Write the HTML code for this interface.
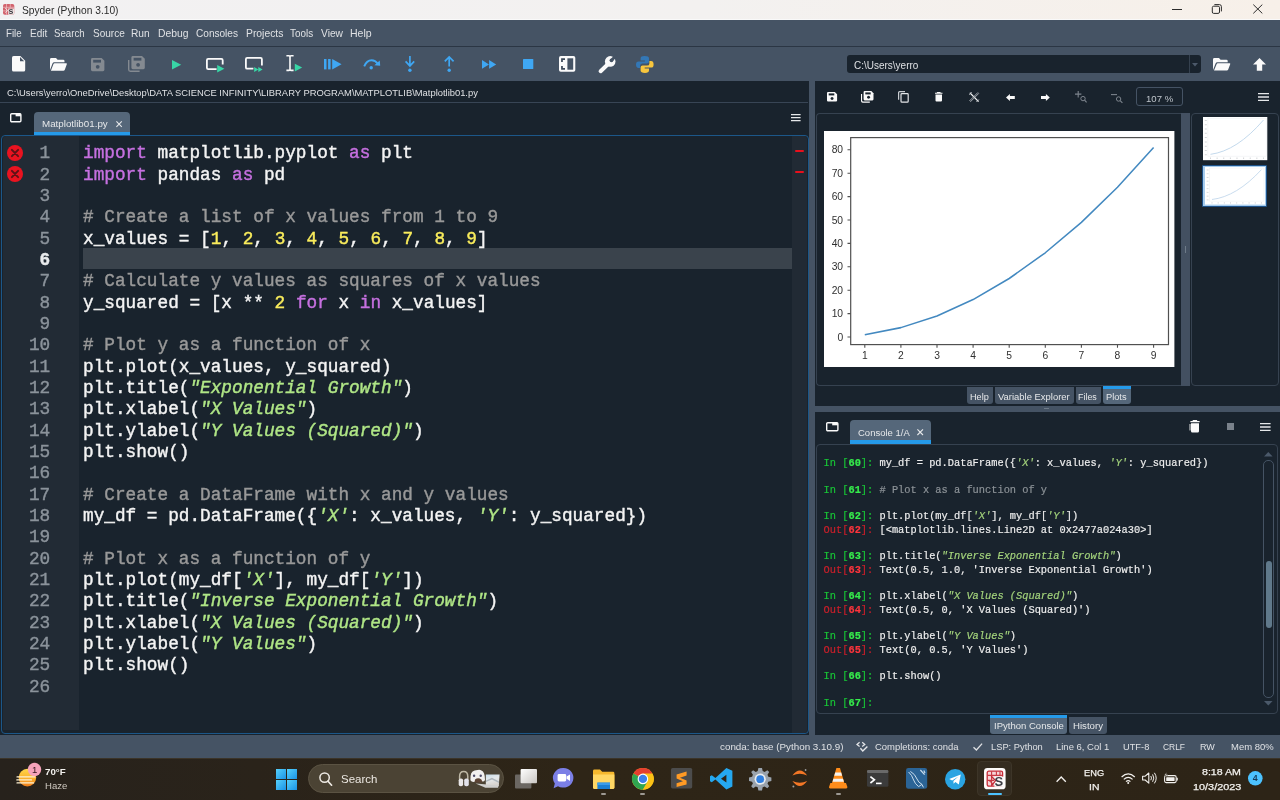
<!DOCTYPE html>
<html><head><meta charset="utf-8"><title>Spyder (Python 3.10)</title>
<style>
*{box-sizing:border-box;margin:0;padding:0}
html,body{width:1280px;height:800px;overflow:hidden;background:#19232d;font-family:"Liberation Sans",sans-serif;color:#e0e1e3}
#root{position:absolute;left:0;top:0;width:1280px;height:800px;overflow:hidden;will-change:transform}
.a{position:absolute}
.t{position:absolute;white-space:pre}
svg{overflow:visible}
</style></head>
<body>
<div id="root">
<div class="a" style="left:0.00px;top:0.00px;width:1280.00px;height:20.00px;background:linear-gradient(90deg,#f2f1f2 0%,#f3f1f0 55%,#f7f0e9 100%);"></div>
<div class="a" style="left:0.00px;top:19.00px;width:1280.00px;height:1.10px;background:#f9f9f9;"></div>
<svg class="a" style="left:3.10px;top:4.10px;" width="11.3" height="10.7" viewBox="0 0 11.3 10.7"><rect x="0" y="0" width="11.3" height="10.7" rx="1.8" fill="#d2626d"/>
<path d="M0 3.3H11.3M0 6.9H4.6M3.5 0V10.7M7.3 0V3.6" stroke="#ecc0c4" stroke-width="0.7" fill="none"/>
<path d="M5.2 4.4H11.3V9Q11.3 10.7 9.6 10.7H5.2Z" fill="#efe3e3"/>
<text x="5.6" y="10.3" font-family="Liberation Sans" font-weight="bold" font-size="8.8" fill="#45444a">s</text>
<path d="M2.2 4.2L4.6 6.4L2.4 8.6" stroke="#f3dfe0" stroke-width="1" fill="none"/></svg>
<span class="t" style="left:21.50px;top:2.75px;font-size:11.20px;line-height:15px;transform:scaleX(0.9127);transform-origin:0 50%;color:#2a2a2a;">Spyder (Python 3.10)</span>
<svg class="a" style="left:1165.00px;top:0.00px;" width="110" height="20" viewBox="0 0 110 20"><path d="M7 9.5H17" stroke="#2b2b2b" stroke-width="1"/>
<rect x="47.3" y="6.2" width="7.2" height="7.2" rx="1.4" fill="none" stroke="#2b2b2b" stroke-width="1"/>
<path d="M49.4 4.6H54.4Q56.4 4.6 56.4 6.6V11.4" fill="none" stroke="#2b2b2b" stroke-width="1"/>
<path d="M88.3 4.6L97.3 13.4M97.3 4.6L88.3 13.4" stroke="#2b2b2b" stroke-width="1"/></svg>
<div class="a" style="left:0.00px;top:20.10px;width:1280.00px;height:25.90px;background:#455364;"></div>
<div class="a" style="left:0.00px;top:45.60px;width:1280.00px;height:1.00px;background:#2b3644;"></div>
<span class="t" style="left:6.30px;top:26.25px;font-size:11.00px;line-height:14px;transform:scaleX(0.8857);transform-origin:0 50%;color:#dfe1e4;">File</span>
<span class="t" style="left:29.70px;top:26.25px;font-size:11.00px;line-height:14px;transform:scaleX(0.9127);transform-origin:0 50%;color:#dfe1e4;">Edit</span>
<span class="t" style="left:54.40px;top:26.25px;font-size:11.00px;line-height:14px;transform:scaleX(0.8779);transform-origin:0 50%;color:#dfe1e4;">Search</span>
<span class="t" style="left:92.50px;top:26.25px;font-size:11.00px;line-height:14px;transform:scaleX(0.9124);transform-origin:0 50%;color:#dfe1e4;">Source</span>
<span class="t" style="left:131.30px;top:26.25px;font-size:11.00px;line-height:14px;transform:scaleX(0.9267);transform-origin:0 50%;color:#dfe1e4;">Run</span>
<span class="t" style="left:157.50px;top:26.25px;font-size:11.00px;line-height:14px;transform:scaleX(0.9409);transform-origin:0 50%;color:#dfe1e4;">Debug</span>
<span class="t" style="left:196.00px;top:26.25px;font-size:11.00px;line-height:14px;transform:scaleX(0.9158);transform-origin:0 50%;color:#dfe1e4;">Consoles</span>
<span class="t" style="left:245.60px;top:26.25px;font-size:11.00px;line-height:14px;transform:scaleX(0.9412);transform-origin:0 50%;color:#dfe1e4;">Projects</span>
<span class="t" style="left:290.30px;top:26.25px;font-size:11.00px;line-height:14px;transform:scaleX(0.8995);transform-origin:0 50%;color:#dfe1e4;">Tools</span>
<span class="t" style="left:321.00px;top:26.25px;font-size:11.00px;line-height:14px;transform:scaleX(0.9304);transform-origin:0 50%;color:#dfe1e4;">View</span>
<span class="t" style="left:350.30px;top:26.25px;font-size:11.00px;line-height:14px;transform:scaleX(0.9592);transform-origin:0 50%;color:#dfe1e4;">Help</span>
<div class="a" style="left:0.00px;top:46.70px;width:1280.00px;height:34.50px;background:#455364;"></div>
<svg class="a" style="left:12.40px;top:56.40px;" width="13.2" height="15.6" viewBox="0 0 13.2 15.6"><path d="M1.6 0H8.4L13.2 4.8V14Q13.2 15.6 11.6 15.6H1.6Q0 15.6 0 14V1.6Q0 0 1.6 0Z" fill="#fafafa"/><path d="M8 1V5.2H12.2Z" fill="#455364"/></svg>
<svg class="a" style="left:50.30px;top:57.80px;" width="17" height="12.8" viewBox="0 0 17 12.8"><path d="M1.4 0H6L7.6 1.7H13.2Q14.5 1.7 14.5 3V4.2H4.2Q3 4.2 2.6 5.3L0 12V1.4Q0 0 1.4 0Z" fill="#fafafa"/><path d="M4.6 5.2H16.2Q17.2 5.2 16.8 6.2L14.8 11.8Q14.4 12.8 13.4 12.8H0.9L3.5 6Q3.8 5.2 4.6 5.2Z" fill="#fafafa"/></svg>
<svg class="a" style="left:90.60px;top:57.50px;" width="13.4" height="13.2" viewBox="0 0 13.4 13.2"><path d="M1.4 0H10.6L13.4 2.8V11.8Q13.4 13.2 12 13.2H1.4Q0 13.2 0 11.8V1.4Q0 0 1.4 0Z" fill="#848a91"/><rect x="2.2" y="1.8" width="7.8" height="2.8" fill="#455364"/><circle cx="6.7" cy="8.8" r="1.9" fill="#455364"/></svg>
<svg class="a" style="left:128.00px;top:56.20px;" width="17" height="16" viewBox="0 0 17 16"><path d="M0 4V13.6Q0 16 2.4 16H11.6V14.6H2.6Q1.4 14.6 1.4 13.4V4Z" fill="#848a91"/><g transform="translate(3.4,0)"><path d="M1.4 0H10.6L13.4 2.8V11.8Q13.4 13.2 12 13.2H1.4Q0 13.2 0 11.8V1.4Q0 0 1.4 0Z" fill="#848a91"/><rect x="2.2" y="1.8" width="7.8" height="2.8" fill="#455364"/><circle cx="6.7" cy="8.8" r="1.9" fill="#455364"/></g></svg>
<svg class="a" style="left:172.00px;top:59.50px;" width="9.2" height="9.6" viewBox="0 0 9.2 9.6"><path d="M0 0L9.2 4.8L0 9.6Z" fill="#38d6a6"/></svg>
<svg class="a" style="left:206.00px;top:57.80px;" width="18.4" height="14.6" viewBox="0 0 18.4 14.6"><path d="M10.6 11.1H2.2Q0.9 11.1 0.9 9.8V2.2Q0.9 0.9 2.2 0.9H15.4Q16.7 0.9 16.7 2.2V6.6" fill="none" stroke="#fafafa" stroke-width="1.8"/><path d="M11.2 6.9L18.4 10.7L11.2 14.6Z" fill="#38d6a6"/></svg>
<svg class="a" style="left:245.00px;top:57.20px;" width="18.4" height="15" viewBox="0 0 18.4 15"><path d="M8.4 11.7H2.2Q0.9 11.7 0.9 10.4V2.2Q0.9 0.9 2.2 0.9H15.6Q16.9 0.9 16.9 2.2V8.6" fill="none" stroke="#fafafa" stroke-width="1.8"/><path d="M9.2 9.9L13.4 12.4L9.2 15Z M13.3 9.9L17.6 12.4L13.3 15Z" fill="#38d6a6"/></svg>
<svg class="a" style="left:285.70px;top:55.30px;" width="16.2" height="16.6" viewBox="0 0 16.2 16.6"><path d="M0.4 0.8H3Q4 0.8 4 1.8V14.4Q4 15.4 3 15.4H0.4M7.6 0.8H5Q4 0.8 4 1.8M7.6 15.4H5Q4 15.4 4 14.4" fill="none" stroke="#fafafa" stroke-width="1.6"/><path d="M8.8 8.7L16.2 12.6L8.8 16.6Z" fill="#38d6a6"/></svg>
<svg class="a" style="left:323.60px;top:59.40px;" width="17.6" height="10.4" viewBox="0 0 17.6 10.4"><rect x="0" y="0" width="2.5" height="10.4" fill="#3fa7f3"/><rect x="4.1" y="0" width="2.5" height="10.4" fill="#3fa7f3"/><path d="M8.2 0L17.6 5.2L8.2 10.4Z" fill="#3fa7f3"/></svg>
<svg class="a" style="left:363.00px;top:57.60px;" width="17.4" height="12.6" viewBox="0 0 17.4 12.6"><path d="M1.2 8.4Q3.6 2.2 8.6 2.2Q12.4 2.2 14.6 5.6" fill="none" stroke="#3fa7f3" stroke-width="1.9"/><path d="M11.4 7.2L17.2 7.8L16.8 2.4Z" fill="#3fa7f3"/><circle cx="8.2" cy="9.8" r="1.7" fill="#3fa7f3"/></svg>
<svg class="a" style="left:405.00px;top:56.00px;" width="9.8" height="16" viewBox="0 0 9.8 16"><path d="M4.9 0V9.6M0.6 5.4L4.9 9.9L9.2 5.4" fill="none" stroke="#3fa7f3" stroke-width="1.7"/><circle cx="4.9" cy="14.2" r="1.7" fill="#3fa7f3"/></svg>
<svg class="a" style="left:444.00px;top:56.00px;" width="10.4" height="16" viewBox="0 0 10.4 16"><path d="M5.2 10.6V1M0.8 5.4L5.2 0.9L9.6 5.4" fill="none" stroke="#3fa7f3" stroke-width="1.7"/><circle cx="5.2" cy="14.2" r="1.7" fill="#3fa7f3"/></svg>
<svg class="a" style="left:481.60px;top:60.00px;" width="14.2" height="8.8" viewBox="0 0 14.2 8.8"><path d="M0 0L7 4.4L0 8.8Z M7.1 0L14.2 4.4L7.1 8.8Z" fill="#3fa7f3"/></svg>
<svg class="a" style="left:522.50px;top:59.40px;" width="10.3" height="10" viewBox="0 0 10.3 10"><rect width="10.3" height="10" rx="0.6" fill="#3fa7f3"/></svg>
<svg class="a" style="left:559.00px;top:56.20px;" width="16.3" height="15.8" viewBox="0 0 16.3 15.8"><rect x="0" y="0" width="16.3" height="15.8" rx="1.8" fill="#fafafa"/><path d="M2.1 6V2.3H6V3.9H3.85V6ZM2.1 10V13.7H6V12.1H3.85V10Z" fill="#3d4a5a"/><rect x="8.4" y="2.3" width="5.8" height="11.4" fill="#455364"/></svg>
<svg class="a" style="left:597.50px;top:55.60px;" width="18.2" height="17.4" viewBox="0 0 18.2 17.4"><path d="M10.4 7.8L2.6 15.2" stroke="#fafafa" stroke-width="4" stroke-linecap="round"/><circle cx="12.2" cy="5.4" r="5.3" fill="#fafafa"/><circle cx="13.5" cy="4.3" r="1.9" fill="#455364"/><path d="M13.5 4.3L18.5 -0.7" stroke="#455364" stroke-width="3"/></svg>
<svg class="a" style="left:636.40px;top:55.60px;" width="17.6" height="17" viewBox="0 0 17.6 17"><path d="M8.6 0Q4.6 0 4.6 2.4V4.6H8.9V5.4H2.6Q0 5.4 0 8.6Q0 12 2.6 12H4.2V9.6Q4.2 7.4 6.6 7.4H11Q13 7.4 13 5.4V2.4Q13 0 8.6 0Z" fill="#3377b5"/>
<path d="M9 17Q13 17 13 14.6V12.4H8.7V11.6H15Q17.6 11.6 17.6 8.4Q17.6 5 15 5H13.4V7.4Q13.4 9.6 11 9.6H6.6Q4.6 9.6 4.6 11.6V14.6Q4.6 17 9 17Z" fill="#f8c63d"/></svg>
<div class="a" style="left:847.00px;top:54.60px;width:354.00px;height:18.30px;background:#19232d;border-radius:3px;"></div>
<div class="a" style="left:1189.00px;top:55.00px;width:1.00px;height:17.50px;background:#35414f;"></div>
<svg class="a" style="left:1192.30px;top:62.50px;" width="6" height="3.4" viewBox="0 0 6 3.4"><path d="M0 0H6L3 3.4Z" fill="#4c596a"/></svg>
<span class="t" style="left:853.70px;top:59.25px;font-size:10.30px;line-height:13px;transform:scaleX(0.9701);transform-origin:0 50%;color:#dfe1e4;">C:\Users\yerro</span>
<svg class="a" style="left:1212.50px;top:58.00px;" width="17.6" height="12.6" viewBox="0 0 17.6 12.6"><path d="M1.4 0H6L7.6 1.7H13.4Q14.7 1.7 14.7 3V4.2H4.3Q3.1 4.2 2.7 5.3L0 12V1.4Q0 0 1.4 0Z" fill="#fafafa"/><path d="M4.8 5.2H16.6Q17.6 5.2 17.2 6.2L15.2 11.6Q14.8 12.6 13.8 12.6H1L3.7 6Q4 5.2 4.8 5.2Z" fill="#fafafa"/></svg>
<svg class="a" style="left:1253.00px;top:58.00px;" width="13" height="12.8" viewBox="0 0 13 12.8"><path d="M6.5 0L13 6.6H9.2V12.8H3.8V6.6H0Z" fill="#fafafa"/></svg>
<div class="a" style="left:0.00px;top:81.20px;width:809.00px;height:654.00px;background:#19232d;"></div>
<div class="a" style="left:809.00px;top:81.20px;width:6.00px;height:654.00px;background:#455364;"></div>
<span class="t" style="left:7.30px;top:86.25px;font-size:9.70px;line-height:13px;transform:scaleX(0.9683);transform-origin:0 50%;color:#dfe1e4;">C:\Users\yerro\OneDrive\Desktop\DATA SCIENCE INFINITY\LIBRARY PROGRAM\MATPLOTLIB\Matplotlib01.py</span>
<div class="a" style="left:0.00px;top:102.00px;width:808.00px;height:1.00px;background:#384555;"></div>
<svg class="a" style="left:10.20px;top:113.40px;" width="11.6" height="9.4" viewBox="0 0 11.6 9.4"><rect x="0.7" y="0.7" width="10.2" height="8" rx="1" fill="none" stroke="#fafafa" stroke-width="1.4"/><rect x="5.6" y="0.7" width="5.3" height="2.6" fill="#fafafa"/></svg>
<div class="a" style="left:34.00px;top:112.00px;width:95.60px;height:23.40px;background:#55677a;border-radius:4px 4px 0 0;"></div>
<div class="a" style="left:34.00px;top:131.80px;width:95.60px;height:3.60px;background:#259ae9;"></div>
<span class="t" style="left:42.00px;top:117.75px;font-size:9.50px;line-height:12px;transform:scaleX(1.0282);transform-origin:0 50%;color:#e6e8ea;">Matplotlib01.py</span>
<svg class="a" style="left:115.60px;top:120.60px;" width="6.2" height="6.2" viewBox="0 0 6.2 6.2"><path d="M0.4 0.4L5.8 5.8M5.8 0.4L0.4 5.8" stroke="#e6e8ea" stroke-width="1.1"/></svg>
<svg class="a" style="left:790.50px;top:114.20px;" width="9.6" height="7.4" viewBox="0 0 9.6 7.4"><path d="M0 0.7H9.6M0 3.7H9.6M0 6.7H9.6" stroke="#e6e8ea" stroke-width="1.2"/></svg>
<div class="a" style="left:1.00px;top:134.80px;width:807.60px;height:599.60px;background:#19232d;border:1.4px solid #1c5789;border-radius:4px;"></div>
<div class="a" style="left:2.60px;top:136.40px;width:76.00px;height:593.40px;background:#222b35;border-radius:3px 0 0 0;"></div>
<div class="a" style="left:792.30px;top:136.40px;width:14.60px;height:596.40px;background:#212a34;border-radius:0 3px 3px 0;"></div>
<div class="a" style="left:795.00px;top:149.80px;width:9.00px;height:2.20px;background:#e8101c;border-radius:1px;"></div>
<div class="a" style="left:795.00px;top:171.00px;width:9.00px;height:2.20px;background:#e8101c;border-radius:1px;"></div>
<div class="a" style="left:83.00px;top:247.90px;width:709.30px;height:21.33px;background:#3a434c;"></div>
<style>.ln,.cl{position:absolute;white-space:pre;font-family:"Liberation Mono",monospace;font-size:17.74px;height:21.333px;line-height:21.333px}.ln,.cl{-webkit-text-stroke:0.4px currentColor}.ln{left:20px;width:30.2px;text-align:right;color:#8b939b}.cl{left:83px}</style>
<div class="ln" style="top:142.58px;">1</div>
<div class="cl" style="top:142.58px"><span style="color:#c670e0">import</span><span style="color:#f4f4f4"> matplotlib.pyplot </span><span style="color:#c670e0">as</span><span style="color:#f4f4f4"> plt</span></div>
<div class="ln" style="top:164.58px;">2</div>
<div class="cl" style="top:164.58px"><span style="color:#c670e0">import</span><span style="color:#f4f4f4"> pandas </span><span style="color:#c670e0">as</span><span style="color:#f4f4f4"> pd</span></div>
<div class="ln" style="top:185.58px;">3</div>
<div class="ln" style="top:206.58px;">4</div>
<div class="cl" style="top:206.58px"><span style="color:#999999"># Create a list of x values from 1 to 9</span></div>
<div class="ln" style="top:228.58px;">5</div>
<div class="cl" style="top:228.58px"><span style="color:#f4f4f4">x_values = [</span><span style="color:#faed5c">1</span><span style="color:#f4f4f4">, </span><span style="color:#faed5c">2</span><span style="color:#f4f4f4">, </span><span style="color:#faed5c">3</span><span style="color:#f4f4f4">, </span><span style="color:#faed5c">4</span><span style="color:#f4f4f4">, </span><span style="color:#faed5c">5</span><span style="color:#f4f4f4">, </span><span style="color:#faed5c">6</span><span style="color:#f4f4f4">, </span><span style="color:#faed5c">7</span><span style="color:#f4f4f4">, </span><span style="color:#faed5c">8</span><span style="color:#f4f4f4">, </span><span style="color:#faed5c">9</span><span style="color:#f4f4f4">]</span></div>
<div class="ln" style="top:249.58px;color:#e8eaec;font-weight:bold;">6</div>
<div class="ln" style="top:270.58px;">7</div>
<div class="cl" style="top:270.58px"><span style="color:#999999"># Calculate y values as squares of x values</span></div>
<div class="ln" style="top:292.58px;">8</div>
<div class="cl" style="top:292.58px"><span style="color:#f4f4f4">y_squared = [x ** </span><span style="color:#faed5c">2</span><span style="color:#f4f4f4"> </span><span style="color:#c670e0">for</span><span style="color:#f4f4f4"> x </span><span style="color:#c670e0">in</span><span style="color:#f4f4f4"> x_values]</span></div>
<div class="ln" style="top:313.58px;">9</div>
<div class="ln" style="top:334.58px;">10</div>
<div class="cl" style="top:334.58px"><span style="color:#999999"># Plot y as a function of x</span></div>
<div class="ln" style="top:356.58px;">11</div>
<div class="cl" style="top:356.58px"><span style="color:#f4f4f4">plt.plot(x_values, y_squared)</span></div>
<div class="ln" style="top:377.58px;">12</div>
<div class="cl" style="top:377.58px"><span style="color:#f4f4f4">plt.title(</span><span style="color:#b0e686;font-style:italic">"Exponential Growth"</span><span style="color:#f4f4f4">)</span></div>
<div class="ln" style="top:398.58px;">13</div>
<div class="cl" style="top:398.58px"><span style="color:#f4f4f4">plt.xlabel(</span><span style="color:#b0e686;font-style:italic">"X Values"</span><span style="color:#f4f4f4">)</span></div>
<div class="ln" style="top:420.58px;">14</div>
<div class="cl" style="top:420.58px"><span style="color:#f4f4f4">plt.ylabel(</span><span style="color:#b0e686;font-style:italic">"Y Values (Squared)"</span><span style="color:#f4f4f4">)</span></div>
<div class="ln" style="top:441.58px;">15</div>
<div class="cl" style="top:441.58px"><span style="color:#f4f4f4">plt.show()</span></div>
<div class="ln" style="top:462.58px;">16</div>
<div class="ln" style="top:484.58px;">17</div>
<div class="cl" style="top:484.58px"><span style="color:#999999"># Create a DataFrame with x and y values</span></div>
<div class="ln" style="top:505.58px;">18</div>
<div class="cl" style="top:505.58px"><span style="color:#f4f4f4">my_df = pd.DataFrame({</span><span style="color:#b0e686;font-style:italic">'X'</span><span style="color:#f4f4f4">: x_values, </span><span style="color:#b0e686;font-style:italic">'Y'</span><span style="color:#f4f4f4">: y_squared})</span></div>
<div class="ln" style="top:526.58px;">19</div>
<div class="ln" style="top:548.58px;">20</div>
<div class="cl" style="top:548.58px"><span style="color:#999999"># Plot x as a function of y</span></div>
<div class="ln" style="top:569.58px;">21</div>
<div class="cl" style="top:569.58px"><span style="color:#f4f4f4">plt.plot(my_df[</span><span style="color:#b0e686;font-style:italic">'X'</span><span style="color:#f4f4f4">], my_df[</span><span style="color:#b0e686;font-style:italic">'Y'</span><span style="color:#f4f4f4">])</span></div>
<div class="ln" style="top:590.58px;">22</div>
<div class="cl" style="top:590.58px"><span style="color:#f4f4f4">plt.title(</span><span style="color:#b0e686;font-style:italic">"Inverse Exponential Growth"</span><span style="color:#f4f4f4">)</span></div>
<div class="ln" style="top:612.58px;">23</div>
<div class="cl" style="top:612.58px"><span style="color:#f4f4f4">plt.xlabel(</span><span style="color:#b0e686;font-style:italic">"X Values (Squared)"</span><span style="color:#f4f4f4">)</span></div>
<div class="ln" style="top:633.58px;">24</div>
<div class="cl" style="top:633.58px"><span style="color:#f4f4f4">plt.ylabel(</span><span style="color:#b0e686;font-style:italic">"Y Values"</span><span style="color:#f4f4f4">)</span></div>
<div class="ln" style="top:654.58px;">25</div>
<div class="cl" style="top:654.58px"><span style="color:#f4f4f4">plt.show()</span></div>
<div class="ln" style="top:676.58px;">26</div>
<svg class="a" style="left:7.00px;top:145.00px;" width="16" height="16" viewBox="0 0 16 16"><circle cx="8" cy="8" r="8" fill="#ea1320"/><path d="M4.9 4.9L11.1 11.1M11.1 4.9L4.9 11.1" stroke="#5e1216" stroke-width="2" stroke-linecap="round"/></svg>
<svg class="a" style="left:7.00px;top:166.33px;" width="16" height="16" viewBox="0 0 16 16"><circle cx="8" cy="8" r="8" fill="#ea1320"/><path d="M4.9 4.9L11.1 11.1M11.1 4.9L4.9 11.1" stroke="#5e1216" stroke-width="2" stroke-linecap="round"/></svg>
<div class="a" style="left:815.00px;top:81.20px;width:465.00px;height:324.30px;background:#19232d;"></div>
<svg class="a" style="left:826.90px;top:92.20px;" width="10.1" height="9.5" viewBox="0 0 10.1 9.5"><path d="M1.1 0H7.8L10.1 2.3V8.4Q10.1 9.5 9 9.5H1.1Q0 9.5 0 8.4V1.1Q0 0 1.1 0Z" fill="#fafafa"/><rect x="1.7" y="1.4" width="5.6" height="2" fill="#19232d"/><circle cx="5.05" cy="6.4" r="1.5" fill="#19232d"/></svg>
<svg class="a" style="left:861.20px;top:90.90px;" width="12.5" height="11.7" viewBox="0 0 12.5 11.7"><path d="M0 3V10Q0 11.7 1.7 11.7H8.8V10.6H2.1Q1.1 10.6 1.1 9.6V3Z" fill="#fafafa"/><g transform="translate(2.6,0)"><path d="M1.1 0H7.7L9.9 2.2V8.3Q9.9 9.4 8.8 9.4H1.1Q0 9.4 0 8.3V1.1Q0 0 1.1 0Z" fill="#fafafa"/><rect x="1.7" y="1.4" width="5.4" height="2" fill="#19232d"/><circle cx="4.95" cy="6.3" r="1.5" fill="#19232d"/></g></svg>
<svg class="a" style="left:897.80px;top:90.90px;" width="10.8" height="11.7" viewBox="0 0 10.8 11.7"><rect x="3" y="2.7" width="7.2" height="8.4" rx="0.9" fill="none" stroke="#e3e5e8" stroke-width="1.2"/><path d="M0.6 8.8V1.6Q0.6 0.6 1.6 0.6H7" fill="none" stroke="#c9cdd2" stroke-width="1.2"/></svg>
<svg class="a" style="left:935.00px;top:92.00px;" width="7.5" height="9.6" viewBox="0 0 7.5 9.6"><path d="M2.2 0H5.3L5.8 0.7H7.5V1.7H0V0.7H1.7Z M0.5 2.5H7V8.6Q7 9.6 6 9.6H1.5Q0.5 9.6 0.5 8.6Z" fill="#fafafa"/></svg>
<svg class="a" style="left:969.40px;top:92.00px;" width="10.2" height="10.2" viewBox="0 0 10.2 10.2"><path d="M0.8 0.8L9.6 9.6" stroke="#f4f4f4" stroke-width="1.25"/><path d="M9 0.4L0.4 9M9.9 1.3L1.3 9.9" stroke="#b8bdc3" stroke-width="0.85"/><path d="M0.4 2.6L2.6 0.4M7.6 9.8L9.8 7.6" stroke="#d5d8dc" stroke-width="1"/></svg>
<svg class="a" style="left:1005.70px;top:93.80px;" width="8.8" height="7" viewBox="0 0 8.8 7"><path d="M0 3.5L3.9 0V2H8.8V5H3.9V7Z" fill="#fafafa"/></svg>
<svg class="a" style="left:1040.70px;top:93.80px;" width="8.8" height="7" viewBox="0 0 8.8 7"><path d="M8.8 3.5L4.9 0V2H0V5H4.9V7Z" fill="#fafafa"/></svg>
<svg class="a" style="left:1075.00px;top:91.20px;" width="11.8" height="11.6" viewBox="0 0 11.8 11.6"><path d="M0 3.1H6.4M3.2 0V6.4" stroke="#7c848d" stroke-width="1.1"/><circle cx="8" cy="7.6" r="2.2" fill="none" stroke="#7c848d" stroke-width="1"/><path d="M9.6 9.2L11.6 11.4" stroke="#7c848d" stroke-width="1.1"/></svg>
<svg class="a" style="left:1110.60px;top:93.60px;" width="11.6" height="9.2" viewBox="0 0 11.6 9.2"><path d="M0 0.6H6" stroke="#7c848d" stroke-width="1.1"/><circle cx="7.6" cy="5" r="2.2" fill="none" stroke="#7c848d" stroke-width="1"/><path d="M9.2 6.6L11.4 9" stroke="#7c848d" stroke-width="1.1"/></svg>
<div class="a" style="left:1136.00px;top:87.40px;width:46.60px;height:19.00px;border:1px solid #455364;border-radius:3px;"></div>
<span class="t" style="left:1145.80px;top:92.25px;font-size:9.70px;line-height:13px;transform:scaleX(0.9889);transform-origin:0 50%;color:#bfc5cb;">107 %</span>
<svg class="a" style="left:1257.80px;top:92.80px;" width="11" height="8" viewBox="0 0 11 8"><path d="M0 0.7H11M0 4H11M0 7.3H11" stroke="#e6e8ea" stroke-width="1.3"/></svg>
<div class="a" style="left:816.00px;top:113.40px;width:366.00px;height:272.40px;border:1px solid #364250;border-radius:4px 0 0 4px;border-right:none;"></div>
<div class="a" style="left:1181.40px;top:113.40px;width:8.80px;height:272.40px;background:#435061;"></div>
<div class="a" style="left:1185.00px;top:246.00px;width:1.00px;height:7.00px;background:#6d7a88;"></div>
<div class="a" style="left:1191.00px;top:113.40px;width:87.60px;height:272.40px;border:1px solid #364250;border-radius:4px;"></div>
<svg class="a" style="left:823.70px;top:131.30px;" width="350.4" height="235.6" viewBox="0 0 350.4 235.6" preserveAspectRatio="none"><rect x="0" y="0" width="350.4" height="236" fill="#ffffff"/><rect x="26.7" y="6.6" width="317.8" height="207" fill="none" stroke="#505050" stroke-width="1.2"/><path d="M23.5 206H26.7M23.5 182.6H26.7M23.5 159.2H26.7M23.5 135.8H26.7M23.5 112.4H26.7M23.5 89H26.7M23.5 65.6H26.7M23.5 42.2H26.7M23.5 18.8H26.7M40.8 213.6V216.8M76.9 213.6V216.8M113 213.6V216.8M149.1 213.6V216.8M185.2 213.6V216.8M221.3 213.6V216.8M257.4 213.6V216.8M293.5 213.6V216.8M329.6 213.6V216.8" stroke="#505050" stroke-width="1.1"/><text x="19.1" y="209.7" text-anchor="end" font-family="Liberation Sans" font-size="10.3" fill="#303030">0</text><text x="19.1" y="186.3" text-anchor="end" font-family="Liberation Sans" font-size="10.3" fill="#303030">10</text><text x="19.1" y="162.9" text-anchor="end" font-family="Liberation Sans" font-size="10.3" fill="#303030">20</text><text x="19.1" y="139.5" text-anchor="end" font-family="Liberation Sans" font-size="10.3" fill="#303030">30</text><text x="19.1" y="116.1" text-anchor="end" font-family="Liberation Sans" font-size="10.3" fill="#303030">40</text><text x="19.1" y="92.7" text-anchor="end" font-family="Liberation Sans" font-size="10.3" fill="#303030">50</text><text x="19.1" y="69.3" text-anchor="end" font-family="Liberation Sans" font-size="10.3" fill="#303030">60</text><text x="19.1" y="45.9" text-anchor="end" font-family="Liberation Sans" font-size="10.3" fill="#303030">70</text><text x="19.1" y="22.5" text-anchor="end" font-family="Liberation Sans" font-size="10.3" fill="#303030">80</text><text x="40.8" y="228.2" text-anchor="middle" font-family="Liberation Sans" font-size="10.3" fill="#303030">1</text><text x="76.9" y="228.2" text-anchor="middle" font-family="Liberation Sans" font-size="10.3" fill="#303030">2</text><text x="113" y="228.2" text-anchor="middle" font-family="Liberation Sans" font-size="10.3" fill="#303030">3</text><text x="149.1" y="228.2" text-anchor="middle" font-family="Liberation Sans" font-size="10.3" fill="#303030">4</text><text x="185.2" y="228.2" text-anchor="middle" font-family="Liberation Sans" font-size="10.3" fill="#303030">5</text><text x="221.3" y="228.2" text-anchor="middle" font-family="Liberation Sans" font-size="10.3" fill="#303030">6</text><text x="257.4" y="228.2" text-anchor="middle" font-family="Liberation Sans" font-size="10.3" fill="#303030">7</text><text x="293.5" y="228.2" text-anchor="middle" font-family="Liberation Sans" font-size="10.3" fill="#303030">8</text><text x="329.6" y="228.2" text-anchor="middle" font-family="Liberation Sans" font-size="10.3" fill="#303030">9</text><path d="M40.8 203.66 L76.9 196.64 L113 184.94 L149.1 168.56 L185.2 147.5 L221.3 121.76 L257.4 91.34 L293.5 56.24 L329.6 16.46" fill="none" stroke="#4389c0" stroke-width="1.55" stroke-linejoin="round"/></svg>
<svg class="a" style="left:1202.60px;top:117.20px;" width="64.3" height="43.2" viewBox="0 0 350.4 235.6" preserveAspectRatio="none"><rect x="0" y="0" width="350.4" height="235.6" fill="#ffffff"/><rect x="26.7" y="6.6" width="317.8" height="207" fill="none" stroke="#eceef0" stroke-width="3"/><path d="M9.7 206H20.7M9.7 182.6H20.7M9.7 159.2H20.7M9.7 135.8H20.7M9.7 112.4H20.7M9.7 89H20.7M9.7 65.6H20.7M9.7 42.2H20.7M9.7 18.8H20.7M40.8 220.6V229.6M76.9 220.6V229.6M113 220.6V229.6M149.1 220.6V229.6M185.2 220.6V229.6M221.3 220.6V229.6M257.4 220.6V229.6M293.5 220.6V229.6M329.6 220.6V229.6" stroke="#d4d6d9" stroke-width="5.5"/><path d="M40.8 203.66 L76.9 196.64 L113 184.94 L149.1 168.56 L185.2 147.5 L221.3 121.76 L257.4 91.34 L293.5 56.24 L329.6 16.46" fill="none" stroke="#bdd5ea" stroke-width="5" stroke-linejoin="round"/></svg>
<div class="a" style="left:1202.20px;top:165.00px;width:64.80px;height:42.40px;background:#a6cbec;border:1.4px solid #1c5189;border-radius:1px;"></div>
<svg class="a" style="left:1204.60px;top:167.40px;" width="60" height="37.6" viewBox="0 0 350.4 235.6" preserveAspectRatio="none"><rect x="0" y="0" width="350.4" height="235.6" fill="#ffffff"/><rect x="26.7" y="6.6" width="317.8" height="207" fill="none" stroke="#eceef0" stroke-width="3"/><path d="M9.7 206H20.7M9.7 182.6H20.7M9.7 159.2H20.7M9.7 135.8H20.7M9.7 112.4H20.7M9.7 89H20.7M9.7 65.6H20.7M9.7 42.2H20.7M9.7 18.8H20.7M40.8 220.6V229.6M76.9 220.6V229.6M113 220.6V229.6M149.1 220.6V229.6M185.2 220.6V229.6M221.3 220.6V229.6M257.4 220.6V229.6M293.5 220.6V229.6M329.6 220.6V229.6" stroke="#d4d6d9" stroke-width="5.5"/><path d="M40.8 203.66 L76.9 196.64 L113 184.94 L149.1 168.56 L185.2 147.5 L221.3 121.76 L257.4 91.34 L293.5 56.24 L329.6 16.46" fill="none" stroke="#bdd5ea" stroke-width="5" stroke-linejoin="round"/></svg>
<div class="a" style="left:966.90px;top:387.40px;width:26.10px;height:16.60px;background:#455364;border-radius:0 0 3px 3px;"></div>
<span class="t" style="left:970.00px;top:390.25px;font-size:9.70px;line-height:13px;transform:scaleX(0.9423);transform-origin:0 50%;color:#e6e8ea;">Help</span>
<div class="a" style="left:994.50px;top:387.40px;width:79.70px;height:16.60px;background:#455364;border-radius:0 0 3px 3px;"></div>
<span class="t" style="left:997.70px;top:390.25px;font-size:9.70px;line-height:13px;transform:scaleX(0.9744);transform-origin:0 50%;color:#e6e8ea;">Variable Explorer</span>
<div class="a" style="left:1075.80px;top:387.40px;width:25.50px;height:16.60px;background:#455364;border-radius:0 0 3px 3px;"></div>
<span class="t" style="left:1078.40px;top:390.25px;font-size:9.70px;line-height:13px;transform:scaleX(0.9179);transform-origin:0 50%;color:#e6e8ea;">Files</span>
<div class="a" style="left:1103.10px;top:385.60px;width:27.90px;height:18.40px;background:#55677a;border-radius:0 0 3px 3px;"></div>
<div class="a" style="left:1103.10px;top:385.60px;width:27.90px;height:3.00px;background:#259ae9;"></div>
<span class="t" style="left:1106.00px;top:390.25px;font-size:9.70px;line-height:13px;transform:scaleX(0.9552);transform-origin:0 50%;color:#e6e8ea;">Plots</span>
<div class="a" style="left:815.00px;top:405.50px;width:465.00px;height:6.00px;background:#455364;"></div>
<div class="a" style="left:1044.00px;top:408.00px;width:5.00px;height:1.00px;background:#6d7a88;"></div>
<div class="a" style="left:815.00px;top:411.50px;width:465.00px;height:323.00px;background:#19232d;"></div>
<svg class="a" style="left:826.00px;top:422.00px;" width="12.6" height="9.4" viewBox="0 0 12.6 9.4"><rect x="0.7" y="0.7" width="11.2" height="8" rx="1" fill="none" stroke="#fafafa" stroke-width="1.4"/><rect x="6.2" y="0.7" width="5.7" height="2.6" fill="#fafafa"/></svg>
<div class="a" style="left:850.40px;top:420.40px;width:80.60px;height:23.00px;background:#55677a;border-radius:4px 4px 0 0;"></div>
<div class="a" style="left:850.40px;top:440.00px;width:80.60px;height:3.50px;background:#259ae9;"></div>
<span class="t" style="left:858.00px;top:426.25px;font-size:9.70px;line-height:13px;transform:scaleX(0.9802);transform-origin:0 50%;color:#e6e8ea;">Console 1/A</span>
<svg class="a" style="left:916.60px;top:429.20px;" width="6.4" height="6.4" viewBox="0 0 6.4 6.4"><path d="M0.4 0.4L6 6M6 0.4L0.4 6" stroke="#e6e8ea" stroke-width="1.1"/></svg>
<svg class="a" style="left:1189.60px;top:420.40px;" width="10" height="12.6" viewBox="0 0 10 12.6"><path d="M3 0H6.8L7.4 0.9H9.6V2.2H0.4V0.9H2.4Z M1 3.2H9V11.2Q9 12.6 7.6 12.6H2.4Q1 12.6 1 11.2Z" fill="#fafafa"/><path d="M0 4V10.5" stroke="#fafafa" stroke-width="0.9"/></svg>
<div class="a" style="left:1226.60px;top:423.40px;width:7.00px;height:6.60px;background:#7a828b;"></div>
<svg class="a" style="left:1260.40px;top:422.60px;" width="10.6" height="8" viewBox="0 0 10.6 8"><path d="M0 0.7H10.6M0 4H10.6M0 7.3H10.6" stroke="#e6e8ea" stroke-width="1.3"/></svg>
<div class="a" style="left:816.40px;top:443.60px;width:461.40px;height:270.20px;border:1px solid #364250;border-radius:4px;"></div>
<div class="a" style="left:1263.00px;top:459.80px;width:10.90px;height:238.00px;border:1px solid #455364;border-radius:5px;"></div>
<div class="a" style="left:1265.60px;top:560.60px;width:6.00px;height:67.00px;background:#60798b;border-radius:3px;"></div>
<svg class="a" style="left:1264.10px;top:452.00px;" width="8.6" height="4.6" viewBox="0 0 8.6 4.6"><path d="M0 4.6L4.3 0L8.6 4.6Z" fill="#4b596a"/></svg>
<svg class="a" style="left:1264.10px;top:701.40px;" width="8.6" height="4.6" viewBox="0 0 8.6 4.6"><path d="M0 0L4.3 4.6L8.6 0Z" fill="#4b596a"/></svg>
<style>.co{position:absolute;left:823.6px;white-space:pre;font-family:"Liberation Mono",monospace;font-size:10.35px;height:13.333px;line-height:13.333px;-webkit-text-stroke:0.18px currentColor}</style>
<div class="co" style="top:456.58px"><span style="color:#18c636">In [</span><span style="color:#36ee4c;font-weight:bold">60</span><span style="color:#18c636">]: </span><span style="color:#eeeeee">my_df = pd.DataFrame({</span><span style="color:#a4d47c;font-style:italic">'X'</span><span style="color:#eeeeee">: x_values, </span><span style="color:#a4d47c;font-style:italic">'Y'</span><span style="color:#eeeeee">: y_squared})</span></div>
<div class="co" style="top:483.58px"><span style="color:#18c636">In [</span><span style="color:#36ee4c;font-weight:bold">61</span><span style="color:#18c636">]: </span><span style="color:#8d9398"># Plot x as a function of y</span></div>
<div class="co" style="top:509.58px"><span style="color:#18c636">In [</span><span style="color:#36ee4c;font-weight:bold">62</span><span style="color:#18c636">]: </span><span style="color:#eeeeee">plt.plot(my_df[</span><span style="color:#a4d47c;font-style:italic">'X'</span><span style="color:#eeeeee">], my_df[</span><span style="color:#a4d47c;font-style:italic">'Y'</span><span style="color:#eeeeee">])</span></div>
<div class="co" style="top:523.58px"><span style="color:#cc1f2a">Out[</span><span style="color:#ff343c;font-weight:bold">62</span><span style="color:#cc1f2a">]: </span><span style="color:#eeeeee">[&lt;matplotlib.lines.Line2D at 0x2477a024a30&gt;]</span></div>
<div class="co" style="top:549.58px"><span style="color:#18c636">In [</span><span style="color:#36ee4c;font-weight:bold">63</span><span style="color:#18c636">]: </span><span style="color:#eeeeee">plt.title(</span><span style="color:#a4d47c;font-style:italic">"Inverse Exponential Growth"</span><span style="color:#eeeeee">)</span></div>
<div class="co" style="top:563.58px"><span style="color:#cc1f2a">Out[</span><span style="color:#ff343c;font-weight:bold">63</span><span style="color:#cc1f2a">]: </span><span style="color:#eeeeee">Text(0.5, 1.0, 'Inverse Exponential Growth')</span></div>
<div class="co" style="top:589.58px"><span style="color:#18c636">In [</span><span style="color:#36ee4c;font-weight:bold">64</span><span style="color:#18c636">]: </span><span style="color:#eeeeee">plt.xlabel(</span><span style="color:#a4d47c;font-style:italic">"X Values (Squared)"</span><span style="color:#eeeeee">)</span></div>
<div class="co" style="top:603.58px"><span style="color:#cc1f2a">Out[</span><span style="color:#ff343c;font-weight:bold">64</span><span style="color:#cc1f2a">]: </span><span style="color:#eeeeee">Text(0.5, 0, 'X Values (Squared)')</span></div>
<div class="co" style="top:629.58px"><span style="color:#18c636">In [</span><span style="color:#36ee4c;font-weight:bold">65</span><span style="color:#18c636">]: </span><span style="color:#eeeeee">plt.ylabel(</span><span style="color:#a4d47c;font-style:italic">"Y Values"</span><span style="color:#eeeeee">)</span></div>
<div class="co" style="top:643.58px"><span style="color:#cc1f2a">Out[</span><span style="color:#ff343c;font-weight:bold">65</span><span style="color:#cc1f2a">]: </span><span style="color:#eeeeee">Text(0, 0.5, 'Y Values')</span></div>
<div class="co" style="top:669.58px"><span style="color:#18c636">In [</span><span style="color:#36ee4c;font-weight:bold">66</span><span style="color:#18c636">]: </span><span style="color:#eeeeee">plt.show()</span></div>
<div class="co" style="top:696.58px"><span style="color:#18c636">In [</span><span style="color:#36ee4c;font-weight:bold">67</span><span style="color:#18c636">]: </span></div>
<div class="a" style="left:990.20px;top:715.20px;width:77.20px;height:18.40px;background:#55677a;border-radius:0 0 3px 3px;"></div>
<div class="a" style="left:990.20px;top:715.20px;width:77.20px;height:3.00px;background:#259ae9;"></div>
<span class="t" style="left:993.60px;top:719.25px;font-size:9.70px;line-height:13px;transform:scaleX(0.9834);transform-origin:0 50%;color:#e6e8ea;">IPython Console</span>
<div class="a" style="left:1069.00px;top:717.00px;width:37.60px;height:16.60px;background:#455364;border-radius:0 0 3px 3px;"></div>
<span class="t" style="left:1072.60px;top:719.25px;font-size:9.70px;line-height:13px;transform:scaleX(0.9940);transform-origin:0 50%;color:#e6e8ea;">History</span>
<div class="a" style="left:0.00px;top:734.60px;width:1280.00px;height:23.20px;background:#455364;"></div>
<span class="t" style="left:720.00px;top:740.25px;font-size:9.80px;line-height:13px;transform:scaleX(1.0030);transform-origin:0 50%;color:#dfe1e4;">conda: base (Python 3.10.9)</span>
<span class="t" style="left:875.00px;top:740.25px;font-size:9.80px;line-height:13px;transform:scaleX(0.9640);transform-origin:0 50%;color:#dfe1e4;">Completions: conda</span>
<span class="t" style="left:990.50px;top:740.25px;font-size:9.80px;line-height:13px;transform:scaleX(0.9508);transform-origin:0 50%;color:#dfe1e4;">LSP: Python</span>
<span class="t" style="left:1056.00px;top:740.25px;font-size:9.80px;line-height:13px;transform:scaleX(0.9668);transform-origin:0 50%;color:#dfe1e4;">Line 6, Col 1</span>
<span class="t" style="left:1122.70px;top:740.25px;font-size:9.80px;line-height:13px;transform:scaleX(0.9472);transform-origin:0 50%;color:#dfe1e4;">UTF-8</span>
<span class="t" style="left:1163.00px;top:740.25px;font-size:9.80px;line-height:13px;transform:scaleX(0.8597);transform-origin:0 50%;color:#dfe1e4;">CRLF</span>
<span class="t" style="left:1199.50px;top:740.25px;font-size:9.80px;line-height:13px;transform:scaleX(0.9226);transform-origin:0 50%;color:#dfe1e4;">RW</span>
<span class="t" style="left:1231.40px;top:740.25px;font-size:9.80px;line-height:13px;transform:scaleX(0.9657);transform-origin:0 50%;color:#dfe1e4;">Mem 80%</span>
<svg class="a" style="left:856.00px;top:741.00px;" width="12.4" height="11.4" viewBox="0 0 12.4 11.4"><path d="M3.6 1.3L1 3.4L3.6 5.5M6.2 1.3L8.8 3.4L6.2 5.5" fill="none" stroke="#e4e6e9" stroke-width="1.25"/><path d="M4.4 7.3L6.8 10L11.4 5.6" fill="none" stroke="#e4e6e9" stroke-width="1.4"/></svg>
<svg class="a" style="left:973.40px;top:742.60px;" width="9.6" height="7.8" viewBox="0 0 9.6 7.8"><path d="M0.5 4.2L3.4 7L9.1 0.6" fill="none" stroke="#dfe1e4" stroke-width="1.3"/></svg>
<div class="a" style="left:0.00px;top:757.80px;width:1280.00px;height:42.20px;background:linear-gradient(90deg,#27221c 0%,#2a231a 20%,#2e2517 45%,#2d2417 100%);"></div>
<div class="a" style="left:0.00px;top:757.80px;width:1280.00px;height:0.80px;background:#3b3429;"></div>
<svg class="a" style="left:14.00px;top:760.00px;" width="30" height="30" viewBox="0 0 30 30"><defs><linearGradient id="sun" x1="0" y1="0" x2="0" y2="1"><stop offset="0" stop-color="#ffd84a"/><stop offset="0.55" stop-color="#fbb02c"/><stop offset="1" stop-color="#ee7d1c"/></linearGradient></defs>
<circle cx="13.4" cy="17.6" r="8.8" fill="url(#sun)"/>
<path d="M3 16.9H21M2.8 19.9H17.5M3 22.9H19.6" stroke="#fdf0cf" stroke-width="1.2" stroke-linecap="round"/>
<circle cx="20.5" cy="9.5" r="6.7" fill="#f6a3ba"/>
<text x="20.6" y="12.9" text-anchor="middle" font-family="Liberation Sans" font-size="9.6" fill="#35161d">1</text></svg>
<span class="t" style="left:45.40px;top:765.75px;font-size:9.50px;line-height:12px;transform:scaleX(1.0213);transform-origin:0 50%;color:#f3f1ee;font-weight:bold;">70°F</span>
<span class="t" style="left:45.20px;top:779.75px;font-size:9.50px;line-height:12px;transform:scaleX(1.0055);transform-origin:0 50%;color:#cfc9c1;">Haze</span>
<svg class="a" style="left:276.20px;top:768.60px;" width="21" height="21" viewBox="0 0 21 21"><defs><linearGradient id="wl" x1="0" y1="0" x2="1" y2="1"><stop offset="0" stop-color="#56d0fb"/><stop offset="1" stop-color="#1a93e6"/></linearGradient></defs>
<rect x="0" y="0" width="10" height="10" fill="url(#wl)"/><rect x="11" y="0" width="10" height="10" fill="url(#wl)"/><rect x="0" y="11" width="10" height="10" fill="url(#wl)"/><rect x="11" y="11" width="10" height="10" fill="url(#wl)"/></svg>
<div class="a" style="left:308.00px;top:764.00px;width:195.80px;height:29.00px;background:#4b4334;border-radius:14.5px;border:0.6px solid #5b5343;"></div>
<svg class="a" style="left:319.00px;top:771.80px;" width="13.4" height="14" viewBox="0 0 13.4 14"><circle cx="5.6" cy="5.6" r="4.7" fill="none" stroke="#eeeae4" stroke-width="1.5"/><path d="M9 9.2L12.6 13.2" stroke="#eeeae4" stroke-width="1.7" stroke-linecap="round"/></svg>
<span class="t" style="left:341.40px;top:771.75px;font-size:11.80px;line-height:15px;transform:scaleX(0.9735);transform-origin:0 50%;color:#ece8e2;">Search</span>
<svg class="a" style="left:458.00px;top:768.00px;" width="42" height="20" viewBox="0 0 42 20"><defs><linearGradient id="lap" x1="0" y1="0" x2="0.3" y2="1"><stop offset="0" stop-color="#c9dde9"/><stop offset="0.45" stop-color="#e6eaec"/><stop offset="1" stop-color="#d8d4cf"/></linearGradient></defs>
<path d="M1.6 11.4V8.6Q1.6 3.4 5.7 3.4Q9.8 3.4 9.8 8.6V11.4" fill="none" stroke="#bdb7a4" stroke-width="1.5"/>
<rect x="0.7" y="10.4" width="4.4" height="7.8" rx="1.9" fill="#e9e7e8"/><rect x="6.2" y="10.4" width="4.6" height="7.8" rx="1.9" fill="#e2e2ea"/>
<path d="M12.4 12.2Q12 3.4 16.6 2.6L19.6 2Q21.6 1.2 23.4 2.4Q27 3.4 27 12Q26 14.4 23 13.2L17.4 13.6Q14 14.8 12.4 12.2Z" fill="#f2f0ef"/>
<circle cx="16.1" cy="7.7" r="1.2" fill="#4b4a68"/><circle cx="22.7" cy="7.7" r="1.2" fill="#4b4a68"/>
<path d="M17 11.6Q20 9.2 23.4 11.4L24.6 14.4H16.6Z" fill="#5c4435"/>
<path d="M27.8 6.6H41.6L40.8 18H27.8Z" fill="url(#lap)"/>
<path d="M28 12.6L34 9.8L41 13.6V15L34 11.6L28 14Z" fill="#aeb7bd"/>
<path d="M17.6 15.6L40.8 17.6L40 19.8L27.4 19.8Z" fill="#cfcfce"/></svg>
<svg class="a" style="left:514.60px;top:768.60px;" width="22" height="19.6" viewBox="0 0 22 19.6"><rect x="0" y="5.4" width="16.4" height="14.2" rx="1" fill="#6b6762"/><defs><linearGradient id="tv" x1="0" y1="0" x2="1" y2="1"><stop offset="0" stop-color="#ffffff"/><stop offset="1" stop-color="#c9c6c2"/></linearGradient></defs><rect x="5.6" y="0" width="16.4" height="14.2" rx="1" fill="url(#tv)"/></svg>
<svg class="a" style="left:553.40px;top:768.40px;" width="21" height="20.4" viewBox="0 0 21 20.4"><path d="M10.5 0A10.2 9.8 0 1 1 5 18.2L0.6 20.2L1.8 15.4A10.2 9.8 0 0 1 10.5 0Z" fill="#7b7fe6"/><rect x="4.6" y="6" width="8.6" height="7.4" rx="1.4" fill="#ffffff"/><path d="M13.6 8.6L17 6.4V13L13.6 10.8Z" fill="#ffffff"/></svg>
<svg class="a" style="left:592.80px;top:768.60px;" width="21.4" height="20" viewBox="0 0 21.4 20"><path d="M0 2Q0 0.6 1.4 0.6H7L9.2 2.8H20Q21.4 2.8 21.4 4.2V18.6Q21.4 20 20 20H1.4Q0 20 0 18.6Z" fill="#f5b82e"/><path d="M0 5.6H21.4V18.6Q21.4 20 20 20H1.4Q0 20 0 18.6Z" fill="#ffd764"/><path d="M4.4 13.6H17V20H4.4Z" fill="#1b7fd3"/><path d="M4.4 13.6H17V16H4.4Z" fill="#3a9cea"/></svg>
<div class="a" style="left:601.00px;top:793.40px;width:5.20px;height:1.60px;background:#9d9993;border-radius:1px;"></div>
<svg class="a" style="left:631.60px;top:767.80px;" width="21.8" height="21.8" viewBox="0 0 21.8 21.8"><circle cx="10.9" cy="10.9" r="10.9" fill="#fbc116"/>
<path d="M10.9 10.9L1.46 5.45A10.9 10.9 0 0 1 20.34 5.45Z" fill="#e53e30"/>
<path d="M10.9 10.9L1.46 5.45A10.9 10.9 0 0 0 10.9 21.8L15.6 13.6Z" fill="#2fa550"/>
<path d="M10.9 5.45H20.34A10.9 10.9 0 0 1 10.9 21.8L15.62 13.63Z" fill="#fbc116"/>
<circle cx="10.9" cy="10.9" r="5.3" fill="#ffffff"/><circle cx="10.9" cy="10.9" r="4.2" fill="#3d7fea"/></svg>
<div class="a" style="left:640.00px;top:793.40px;width:5.20px;height:1.60px;background:#9d9993;border-radius:1px;"></div>
<svg class="a" style="left:671.20px;top:768.20px;" width="21.2" height="20.4" viewBox="0 0 21.2 20.4"><rect width="21.2" height="20.4" rx="1.6" fill="#4c4c4c"/><path d="M5.6 6.6L15.6 3.4V7.6L9 9.8L15.6 12.4V16.4L5.6 19V15.2L12 13.2L5.6 10.6Z" fill="#ff9a24"/></svg>
<svg class="a" style="left:709.80px;top:768.20px;" width="22.4" height="21.4" viewBox="0 0 22.4 21.4"><path d="M16.4 0L22.4 2.8V18.6L16.4 21.4L5.4 11.4L1.8 14.2L0 13.2V8.2L1.8 7.2L5.4 10L16.4 0ZM16.4 6.8L11 10.7L16.4 14.6Z" fill="#25a8f0"/></svg>
<svg class="a" style="left:748.80px;top:767.80px;" width="22.4" height="22.4" viewBox="0 0 22.4 22.4"><path d="M9.4 0H13L13.7 3.1L15.6 3.9L18.3 2.2L20.2 4.1L18.5 6.8L19.3 8.7L22.4 9.4V13L19.3 13.7L18.5 15.6L20.2 18.3L18.3 20.2L15.6 18.5L13.7 19.3L13 22.4H9.4L8.7 19.3L6.8 18.5L4.1 20.2L2.2 18.3L3.9 15.6L3.1 13.7L0 13V9.4L3.1 8.7L3.9 6.8L2.2 4.1L4.1 2.2L6.8 3.9L8.7 3.1Z" fill="#9aa3ad"/><circle cx="11.2" cy="11.2" r="5.6" fill="#e9edf1"/><circle cx="11.2" cy="11.2" r="3.9" fill="#2f7fe0"/></svg>
<svg class="a" style="left:791.50px;top:769.00px;" width="15.6" height="18.6" viewBox="0 0 15.6 18.6"><path d="M0.4 6.6Q7.8 -3.4 15.2 6.6Q7.8 3 0.4 6.6Z" fill="#f37726"/><path d="M0.4 12Q7.8 22 15.2 12Q7.8 15.6 0.4 12Z" fill="#f37726"/><circle cx="13.6" cy="1" r="0.9" fill="#9e9e9e"/><circle cx="1.4" cy="17.4" r="1" fill="#9e9e9e"/></svg>
<svg class="a" style="left:829.00px;top:768.20px;" width="18.4" height="20.4" viewBox="0 0 18.4 20.4"><path d="M9.2 0L11 0L15.4 15H3L7.4 0Z" fill="#ff8c1a"/><path d="M6.2 4.6H12.2L13.1 7.8H5.3Z M4.4 10.8H14L14.9 13.8H3.5Z" fill="#f2f2f2"/><path d="M1.4 15H17L18.4 19Q18.6 20.4 17.2 20.4H1.2Q-0.2 20.4 0 19Z" fill="#ff8c1a"/></svg>
<div class="a" style="left:835.60px;top:793.40px;width:5.20px;height:1.60px;background:#9d9993;border-radius:1px;"></div>
<svg class="a" style="left:866.60px;top:769.80px;" width="21.4" height="16.8" viewBox="0 0 21.4 16.8"><rect width="21.4" height="16.8" rx="1.4" fill="#3b3b3b"/><rect width="21.4" height="3" rx="1.2" fill="#6a6a6a"/><path d="M3.4 6.6L7.4 9.8L3.4 13" fill="none" stroke="#ffffff" stroke-width="1.7"/><path d="M9 13.4H14.6" stroke="#ffffff" stroke-width="1.6"/></svg>
<svg class="a" style="left:905.80px;top:767.80px;" width="21.2" height="20.8" viewBox="0 0 21.2 20.8"><rect width="21.2" height="20.8" rx="2.4" fill="#2b6496"/><path d="M2.6 4Q6 7 7.6 12Q9 16 12.6 18.6M4.4 3.4Q9 6 11 11Q12.4 14.6 16 16.4M12.6 18.6L16 16.4L17.4 19.4" fill="none" stroke="#c9dcec" stroke-width="1"/><path d="M14.4 2L18.6 6.6M17.8 2.4L19 5" stroke="#c9dcec" stroke-width="1.2"/></svg>
<svg class="a" style="left:945.30px;top:768.60px;" width="20.4" height="20.4" viewBox="0 0 20.4 20.4"><circle cx="10.2" cy="10.2" r="10.2" fill="#2aa4e2"/><path d="M4.2 10L15.8 5.4L13.8 15.6L10.4 13L8.6 14.8L8.4 12L13.4 7.6L7.2 11.4Z" fill="#ffffff"/></svg>
<div class="a" style="left:977.00px;top:761.00px;width:35.00px;height:34.60px;background:#342c20;border-radius:4px;border:0.6px solid #3d3528;"></div>
<svg class="a" style="left:983.70px;top:768.00px;" width="21.6" height="21.3" viewBox="0 0 21.6 21.3"><rect width="21.6" height="21.3" rx="3.4" fill="#fdfbfa"/>
<rect x="3.2" y="3.2" width="15.4" height="15" rx="1.6" fill="#f6d5d7" stroke="#c62b36" stroke-width="1.3"/>
<path d="M3.2 7.4H18.6M3.2 12.4H10M7.6 3.2V18.2M12.4 3.2V8M16 3.2V7.4M5 12.4L9.4 16.4" fill="none" stroke="#c93842" stroke-width="1.1"/>
<path d="M10.4 8.6H20V18.8H10.4Z" fill="#fdfbfa"/>
<path d="M7.2 8.2L11.6 12.6L7.6 17.6" fill="none" stroke="#c62b36" stroke-width="1.3"/>
<text x="10.6" y="18.2" font-family="Liberation Sans" font-weight="bold" font-size="13" fill="#3e3e44">S</text></svg>
<div class="a" style="left:987.60px;top:793.00px;width:14.00px;height:2.20px;background:#4cc2ff;border-radius:1.1px;"></div>
<svg class="a" style="left:1055.50px;top:775.60px;" width="10.4" height="6.4" viewBox="0 0 10.4 6.4"><path d="M0.6 5.8L5.2 1L9.8 5.8" fill="none" stroke="#f3f1ee" stroke-width="1.3"/></svg>
<span class="t" style="left:1083.90px;top:766.75px;font-size:9.50px;line-height:12px;transform:scaleX(0.9764);transform-origin:0 50%;color:#f3f1ee;-webkit-text-stroke:0.25px currentColor;">ENG</span>
<span class="t" style="left:1088.90px;top:780.75px;font-size:9.50px;line-height:12px;transform:scaleX(1.0947);transform-origin:0 50%;color:#f3f1ee;-webkit-text-stroke:0.25px currentColor;">IN</span>
<svg class="a" style="left:1121.00px;top:772.60px;" width="14.4" height="11" viewBox="0 0 14.4 11"><path d="M0.6 4Q7.2 -2.4 13.8 4M2.8 6.4Q7.2 2.2 11.6 6.4M5 8.6Q7.2 6.6 9.4 8.6" fill="none" stroke="#f3f1ee" stroke-width="1.2"/><circle cx="7.2" cy="10" r="1" fill="#f3f1ee"/></svg>
<svg class="a" style="left:1141.90px;top:772.20px;" width="14.8" height="12.2" viewBox="0 0 14.8 12.2"><path d="M0.6 4.2H3.2L6.8 1V11.2L3.2 8H0.6Z" fill="none" stroke="#f3f1ee" stroke-width="1.1" stroke-linejoin="round"/><path d="M8.8 4Q10.2 6.1 8.8 8.2M10.6 2.4Q13 6.1 10.6 9.8M12.4 0.8Q16 6.1 12.4 11.4" fill="none" stroke="#f3f1ee" stroke-width="1"/></svg>
<svg class="a" style="left:1163.20px;top:771.80px;" width="15.4" height="11.2" viewBox="0 0 15.4 11.2"><rect x="1.6" y="3.6" width="11.6" height="7" rx="1.6" fill="none" stroke="#f3f1ee" stroke-width="1.1"/><rect x="3.2" y="5.2" width="8.4" height="3.8" rx="0.6" fill="#f3f1ee"/><path d="M13.6 5.8H14.8V8.4H13.6Z" fill="#f3f1ee"/><path d="M3.8 0L1.2 3.6H3L2.2 6L5 2.4H3.2Z" fill="#f3f1ee" stroke="#2c2418" stroke-width="0.5"/></svg>
<span class="t" style="left:1202.30px;top:765.75px;font-size:9.60px;line-height:12px;transform:scaleX(1.1072);transform-origin:0 50%;color:#f3f1ee;-webkit-text-stroke:0.25px currentColor;">8:18 AM</span>
<span class="t" style="left:1192.90px;top:780.75px;font-size:9.60px;line-height:12px;transform:scaleX(1.1333);transform-origin:0 50%;color:#f3f1ee;-webkit-text-stroke:0.25px currentColor;">10/3/2023</span>
<svg class="a" style="left:1247.90px;top:771.40px;" width="14.6" height="14.6" viewBox="0 0 14.6 14.6"><circle cx="7.3" cy="7.3" r="7.3" fill="#4cc2ff"/><text x="7.3" y="10.5" text-anchor="middle" font-family="Liberation Sans" font-weight="bold" font-size="8.8" fill="#173a58">4</text></svg>
</div>
</body></html>
